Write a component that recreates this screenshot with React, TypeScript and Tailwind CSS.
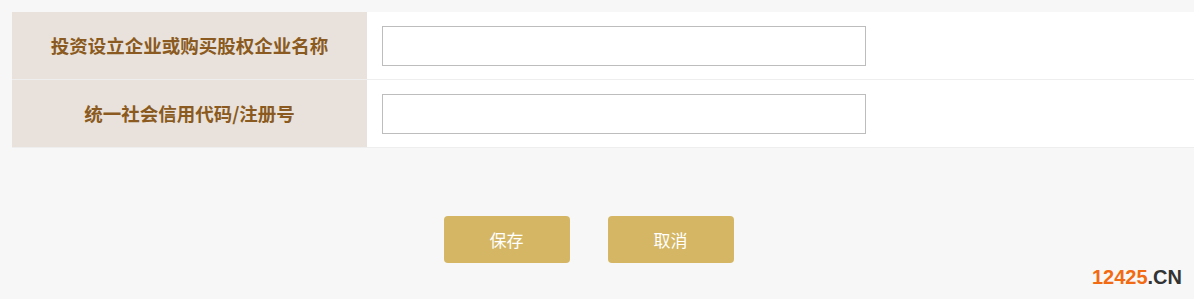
export default function App() {
  const rows = ['投资设立企业或购买股权企业名称', '统一社会信用代码/注册号'];

  return (
    <div
      className="relative h-[299px] w-full overflow-hidden bg-[#f7f7f7] pt-3 pl-3"
      style={{ fontFamily: '"Microsoft YaHei", "Noto Sans CJK SC", sans-serif' }}
    >
      {/* Form table */}
      <div className="flex flex-col bg-white">
        {rows.map((label, i) => (
          <div key={i} className="flex h-[68px] border-b border-[#eeeeee]">
            <div className="flex w-[355px] shrink-0 items-center justify-center bg-[#e9e2dc] text-[18.5px] font-bold text-[#8a5a20]">
              {label}
            </div>
            <div className="flex flex-1 items-center pl-[15px]">
              <input
                type="text"
                className="h-[40px] w-[484px] border border-[#bdbdbd] bg-white px-2 outline-none"
              />
            </div>
          </div>
        ))}
      </div>

      {/* Actions */}
      <div className="mt-[68px] flex justify-center gap-[38px] pr-[29px]">
        <button className="h-[47px] w-[126px] rounded-[4px] bg-[#d4b664] text-[17px] text-white">
          保存
        </button>
        <button className="h-[47px] w-[126px] rounded-[4px] bg-[#d4b664] text-[17px] text-white">
          取消
        </button>
      </div>

      {/* Watermark */}
      <div
        className="absolute right-[12px] bottom-[12px] text-[20px] font-bold leading-none"
        style={{ fontFamily: '"Liberation Sans", Arial, sans-serif' }}
      >
        <span className="text-[#f26a12]">12425</span>
        <span className="text-[#333333]">.CN</span>
      </div>
    </div>
  );
}
